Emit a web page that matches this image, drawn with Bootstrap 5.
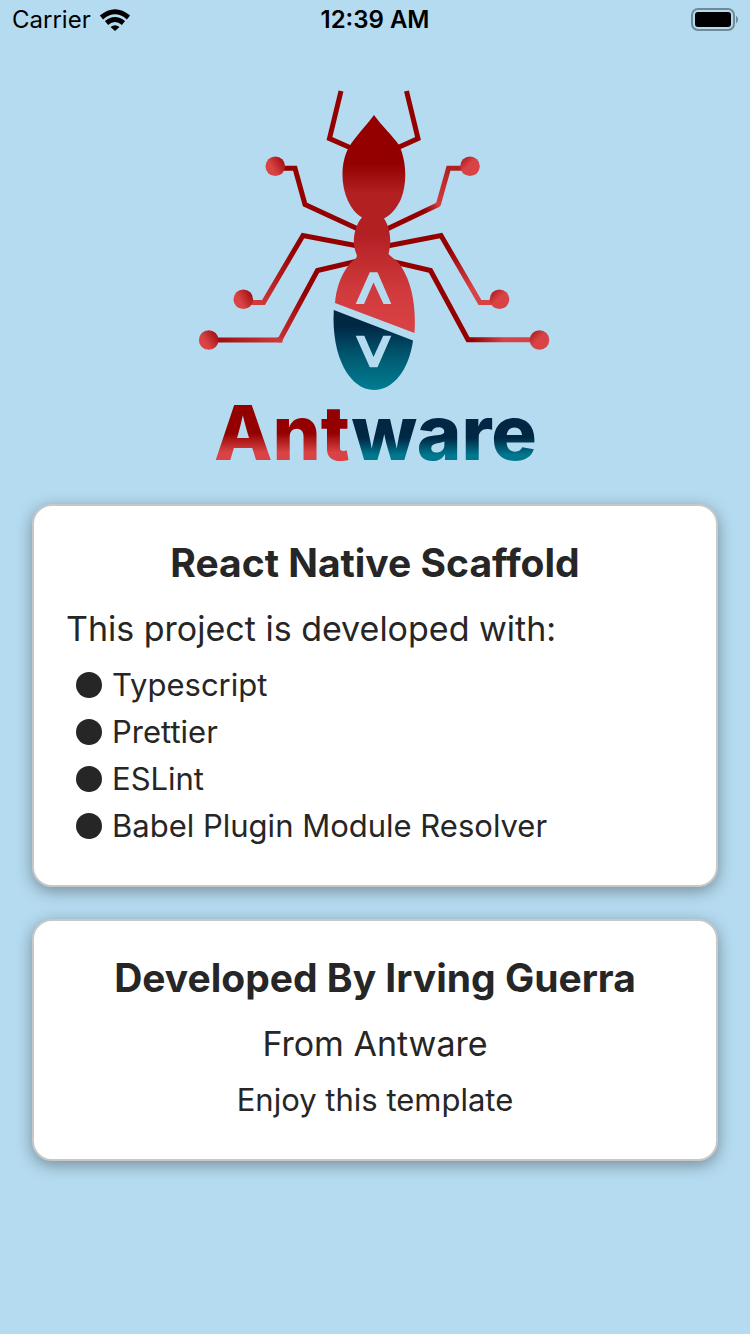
<!DOCTYPE html>
<html lang="en">
<head>
<meta charset="utf-8">
<meta name="viewport" content="width=device-width, initial-scale=1">
<title>React Native Scaffold</title>
<link href="https://cdn.jsdelivr.net/npm/bootstrap@5.3.0/dist/css/bootstrap.min.css" rel="stylesheet">
<style>
  body { background: #b5dbf0; color: #262626; font-family: Inter, "Liberation Sans", sans-serif; }
  .status-bar { height: 40px; padding: 0 12px; color: #000; font-size: 24px; line-height: 40px; }
  .status-time { font-weight: 600; }
  .logo { width: 362px; max-width: 100%; margin: 44px auto 4px; }
  .wordmark { font: 800 76px Inter, sans-serif; }
  .panel { border: 2px solid #c8c8c8; border-radius: 20px; padding: 32px 32px 36px; margin-bottom: 32px; box-shadow: 0 4px 16px rgba(0, 0, 0, .36); background: #fff; }
  .panel-title { font-size: 39px; line-height: 50px; font-weight: 700; margin-bottom: 19px; }
  .panel-sub { font-size: 34px; line-height: 44px; margin-bottom: 10px; }
  .panel-text { font-size: 31px; line-height: 47px; margin-bottom: 0; }
  .dot { width: 26px; height: 26px; margin: 0 10px; background: #262626; }
</style>
</head>
<body>
<header class="status-bar row g-0 align-items-center">
  <div class="col d-flex align-items-center gap-2">
    <span>Carrier</span>
    <svg width="32" height="24" viewBox="98 8 32 24" aria-label="Wi-Fi">
      <g fill="none" stroke="#000" stroke-width="5"><path d="M100.500 17.500Q114 6 127.500 17.500"/><path d="M105.500 23Q114 16 122.500 23"/></g>
      <path d="M109.500 27Q114 23.500 118.500 27L114 31Z"/>
    </svg>
  </div>
  <div class="col-auto status-time">12:39 AM</div>
  <div class="col d-flex justify-content-end">
    <svg width="48" height="24" viewBox="690 8 48 24" aria-label="Battery full">
      <rect x="692" y="9" width="42" height="21" rx="6" fill="none" stroke="#718a97" stroke-width="2"/>
      <rect x="695" y="12" width="36" height="15" rx="3"/>
      <path d="M736 15.500Q740 19.500 736 23.500Z" fill="#718a97"/>
    </svg>
  </div>
</header>

<main class="container-fluid px-4">
  <svg class="logo d-block" viewBox="194 84 362 416" role="img" aria-label="Antware">
    <defs>
      <linearGradient id="body-red" gradientUnits="userSpaceOnUse" x1="0" y1="115" x2="0" y2="333">
        <stop offset="0" stop-color="#940000"/><stop offset=".22" stop-color="#940000"/><stop offset=".36" stop-color="#b22022"/>
        <stop offset=".55" stop-color="#b32023"/><stop offset=".8" stop-color="#d03a3c"/><stop offset="1" stop-color="#d94346"/>
      </linearGradient>
      <linearGradient id="body-blue" gradientUnits="userSpaceOnUse" x1="0" y1="310" x2="0" y2="390">
        <stop offset=".2" stop-color="#002845"/><stop offset=".6" stop-color="#005b73"/><stop offset="1" stop-color="#007d92"/>
      </linearGradient>
      <linearGradient id="leg-left" gradientUnits="userSpaceOnUse" x1="330" y1="250" x2="240" y2="320">
        <stop offset=".25" stop-color="#940000"/><stop offset=".8" stop-color="#d23c3f"/>
      </linearGradient>
      <linearGradient id="leg-left-low" gradientUnits="userSpaceOnUse" x1="330" y1="285" x2="275" y2="340">
        <stop offset=".3" stop-color="#940000"/><stop offset="1" stop-color="#cc3538"/>
      </linearGradient>
      <linearGradient id="foot-left-low" gradientUnits="userSpaceOnUse" x1="215" y1="0" x2="280" y2="0">
        <stop offset="0" stop-color="#9c0b0c"/><stop offset="1" stop-color="#d03a3c"/>
      </linearGradient>
      <linearGradient id="leg-right" gradientUnits="userSpaceOnUse" x1="441" y1="236" x2="480" y2="302">
        <stop offset=".2" stop-color="#940000"/><stop offset=".8" stop-color="#d84245"/>
      </linearGradient>
      <linearGradient id="leg-right-low" gradientUnits="userSpaceOnUse" x1="468" y1="0" x2="504" y2="0">
        <stop offset=".1" stop-color="#940000"/><stop offset="1" stop-color="#d84245"/>
      </linearGradient>
      <linearGradient id="leg-right-top" gradientUnits="userSpaceOnUse" x1="424" y1="211" x2="439" y2="204">
        <stop offset="0" stop-color="#940000"/><stop offset="1" stop-color="#d23c3f"/>
      </linearGradient>
      <linearGradient id="shin-right-top" gradientUnits="userSpaceOnUse" x1="438" y1="204" x2="449" y2="168">
        <stop offset="0" stop-color="#d23c3f"/><stop offset="1" stop-color="#b02022"/>
      </linearGradient>
      <linearGradient id="node-left" x1="1" y1="0" x2="0" y2=".6"><stop offset=".1" stop-color="#a00d0e"/><stop offset=".75" stop-color="#d94346"/></linearGradient>
      <linearGradient id="node-right" x1="0" y1="0" x2=".7" y2=".7"><stop offset=".15" stop-color="#ae1d20"/><stop offset=".65" stop-color="#d94346"/></linearGradient>
      <linearGradient id="word-red" gradientUnits="userSpaceOnUse" x1="0" y1="403" x2="0" y2="461">
        <stop offset=".52" stop-color="#940000"/><stop offset=".85" stop-color="#d94346"/>
      </linearGradient>
      <linearGradient id="word-blue" gradientUnits="userSpaceOnUse" x1="0" y1="403" x2="0" y2="461">
        <stop offset=".6" stop-color="#002845"/><stop offset=".9" stop-color="#00788e"/>
      </linearGradient>
    </defs>
    <g fill="none" stroke="#940000" stroke-width="5">
      <path d="M341 91L329.500 138.500L351 148"/>
      <path d="M406.500 91L418 138.500L397 148"/>
      <path d="M283 168.300H295L305 204.500L358 229"/>
      <path d="M387 229L438.500 204.500" stroke="url(#leg-right-top)"/>
      <path d="M436.500 205.500L438.500 204L448.500 168.300H464" stroke="url(#shin-right-top)"/>
      <path d="M358 246L303 235.500L263.500 302.500H250" stroke="url(#leg-left)"/>
      <path d="M387 246L441 235.500L480 302.500H495" stroke="url(#leg-right)"/>
      <path d="M358 261L317.500 270.500L280 339.800H277" stroke="url(#leg-left-low)"/>
      <path d="M280 339.800V339.900H215" stroke="url(#foot-left-low)"/>
      <path d="M390 261L430.500 270.500L468 339.800H535" stroke="url(#leg-right-low)"/>
    </g>
    <g fill="url(#node-left)"><circle cx="275.300" cy="166.300" r="9.800"/><circle cx="243.300" cy="299.300" r="9.800"/><circle cx="208.700" cy="340" r="9.800"/></g>
    <g fill="url(#node-right)"><circle cx="470" cy="166.300" r="9.800"/><circle cx="499.500" cy="299.300" r="9.800"/><circle cx="539.500" cy="340" r="9.800"/></g>
    <path fill="url(#body-red)" d="M374 115C365 127 355 137 349 147C341 161 340 184 348 201C352 209 356 214 362 217.500C355 225 352 240 355 250L357 256C356 260 352 260 348 266C340 277 336 290 335 303L414.500 333C416 308 413 285 401 266C398 261 392 258 388.500 254C392 241 390 227 384 218.500C391 215 397 208 401 199C407 184 407 162 399 145C392 135 382 126 374 115Z"/>
    <path fill="url(#body-blue)" d="M333.800 310L413 340.500C409 370 393 390 374 390C350 390 331 357 333.800 310Z"/>
    <path fill="#b5dbf0" d="M355.700 304L369.800 272.300H377.500L391.300 304H383.500L373.500 282.500L364 304ZM355.700 335.700H364.300L373.500 357L383.200 335.700H391.300L377.500 367.300H369.800Z"/>
    <text class="wordmark" x="214" y="460"><tspan fill="url(#word-red)">Ant</tspan><tspan fill="url(#word-blue)">ware</tspan></text>
  </svg>

  <div class="px-2">
    <section class="panel">
      <h1 class="panel-title text-center">React Native Scaffold</h1>
      <p class="panel-sub">This project is developed with:</p>
      <ul class="panel-text list-unstyled">
        <li class="d-flex align-items-center"><span class="dot rounded-circle"></span>Typescript</li>
        <li class="d-flex align-items-center"><span class="dot rounded-circle"></span>Prettier</li>
        <li class="d-flex align-items-center"><span class="dot rounded-circle"></span>ESLint</li>
        <li class="d-flex align-items-center"><span class="dot rounded-circle"></span>Babel Plugin Module Resolver</li>
      </ul>
    </section>
    <section class="panel text-center">
      <h2 class="panel-title">Developed By Irving Guerra</h2>
      <p class="panel-sub">From Antware</p>
      <p class="panel-text">Enjoy this template</p>
    </section>
  </div>
</main>
<script src="https://cdn.jsdelivr.net/npm/bootstrap@5.3.0/dist/js/bootstrap.bundle.min.js"></script>
</body>
</html>
